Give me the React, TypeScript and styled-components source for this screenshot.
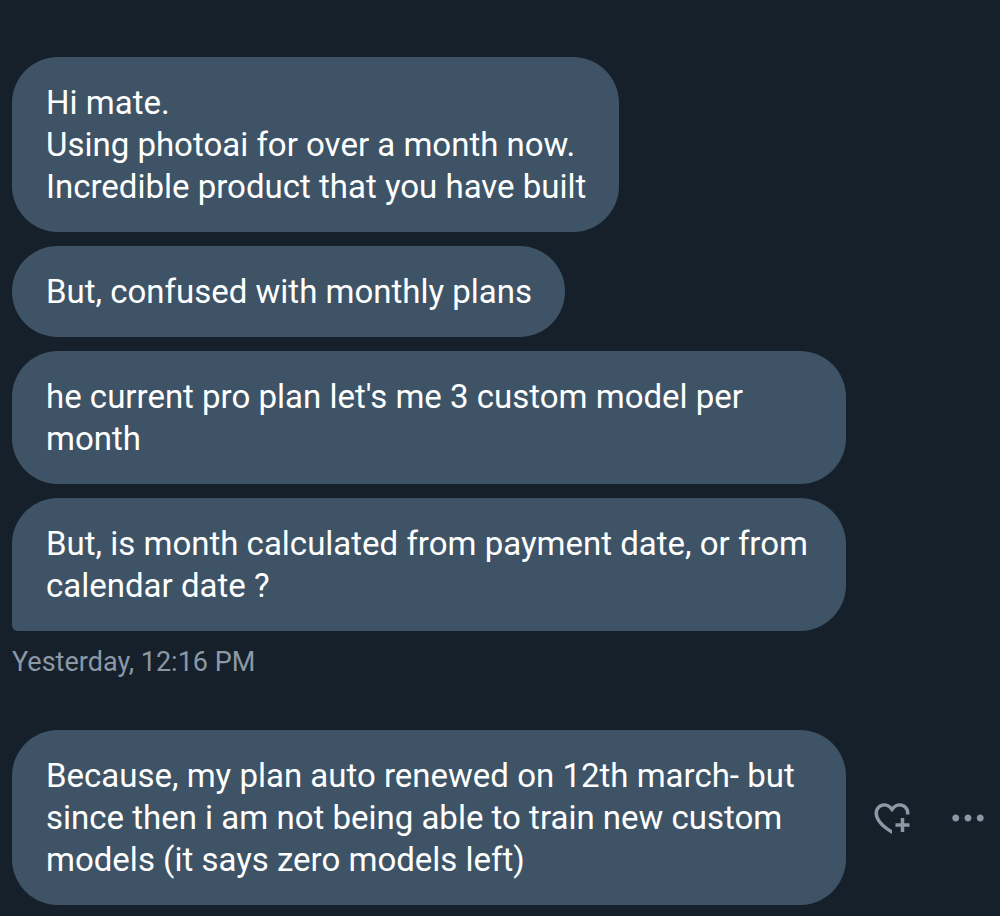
import React from "react";
import styled, { createGlobalStyle } from "styled-components";

const GlobalStyle = createGlobalStyle`
  * { box-sizing: border-box; }
  body {
    margin: 0;
    background: #16202a;
    font-family: Roboto, "Liberation Sans", sans-serif;
  }
`;

const Conversation = styled.main`
  display: flex;
  flex-direction: column;
  padding: 57px 11px 11px 12px;
`;

const Group = styled.section`
  display: flex;
  flex-direction: column;
  gap: 14px;

  & + & {
    margin-top: 50px;
  }
`;

const MessageRow = styled.div`
  display: flex;
  align-items: center;
  justify-content: space-between;
`;

const Bubble = styled.p<{ $tail?: boolean }>`
  margin: 0;
  max-width: calc(100% - 143px);
  padding: 25px 33px 24px 34px;
  border-radius: 46px;
  border-bottom-left-radius: ${(p) => (p.$tail ? "6px" : "46px")};
  background: #3e5466;
  color: #fff;
  font-size: 33px;
  line-height: 42px;
  white-space: pre-line;
`;

const Timestamp = styled.time`
  margin-top: -1px;
  color: #8b98a5;
  font-size: 27px;
  line-height: 36px;
`;

const Actions = styled.div`
  display: flex;
  gap: 34px;
`;

const IconButton = styled.button`
  display: flex;
  padding: 0;
  border: 0;
  background: none;
  color: #8b98a5;
  cursor: pointer;

  svg {
    width: 42px;
    height: 42px;
    fill: currentColor;
  }
`;

const earlier = [
  "Hi mate.\nUsing photoai for over a month now.\nIncredible product that you have built",
  "But, confused with monthly plans",
  "he current pro plan let's me 3 custom model per month",
  "But, is month calculated from payment date, or from calendar date ?",
];

export default function App() {
  return (
    <>
      <GlobalStyle />
      <Conversation>
        <Group>
          {earlier.map((text, i) => (
            <MessageRow key={text}>
              <Bubble $tail={i === earlier.length - 1}>{text}</Bubble>
            </MessageRow>
          ))}
          <Timestamp>Yesterday, 12:16 PM</Timestamp>
        </Group>
        <Group>
          <MessageRow>
            <Bubble>
              Because, my plan auto renewed on 12th march- but since then i am not being able to train new custom models (it says zero models left)
            </Bubble>
            <Actions>
              <IconButton type="button" aria-label="Add reaction">
                <svg viewBox="0 0 24 24" aria-hidden="true">
                  <path d="M17 12v3h-2.998v2h3v3h2v-3h3v-2h-3.001v-3H17zm-5 6.839c-3.871-2.34-6.053-4.639-7.127-6.609-1.112-2.04-1.031-3.7-.479-4.82.561-1.13 1.667-1.84 2.91-1.91 1.222-.06 2.68.51 3.892 2.16l.806 1.09.805-1.09c1.211-1.65 2.668-2.22 3.89-2.16 1.242.07 2.347.78 2.908 1.91.334.677.49 1.554.321 2.59h2.011c.153-1.283-.039-2.469-.539-3.48-.887-1.79-2.647-2.91-4.601-3.01-1.65-.09-3.367.56-4.796 2.01-1.43-1.45-3.147-2.1-4.798-2.01-1.954.1-3.714 1.22-4.601 3.01-.896 1.81-.846 4.17.514 6.67 1.353 2.48 4.003 5.12 8.382 7.67l.502.299v-2.32z" />
                </svg>
              </IconButton>
              <IconButton type="button" aria-label="More options">
                <svg viewBox="0 0 24 24" aria-hidden="true">
                  <path d="M3 12c0-1.1.9-2 2-2s2 .9 2 2-.9 2-2 2-2-.9-2-2zm9 2c1.1 0 2-.9 2-2s-.9-2-2-2-2 .9-2 2 .9 2 2 2zm7 0c1.1 0 2-.9 2-2s-.9-2-2-2-2 .9-2 2 .9 2 2 2z" />
                </svg>
              </IconButton>
            </Actions>
          </MessageRow>
        </Group>
      </Conversation>
    </>
  );
}
